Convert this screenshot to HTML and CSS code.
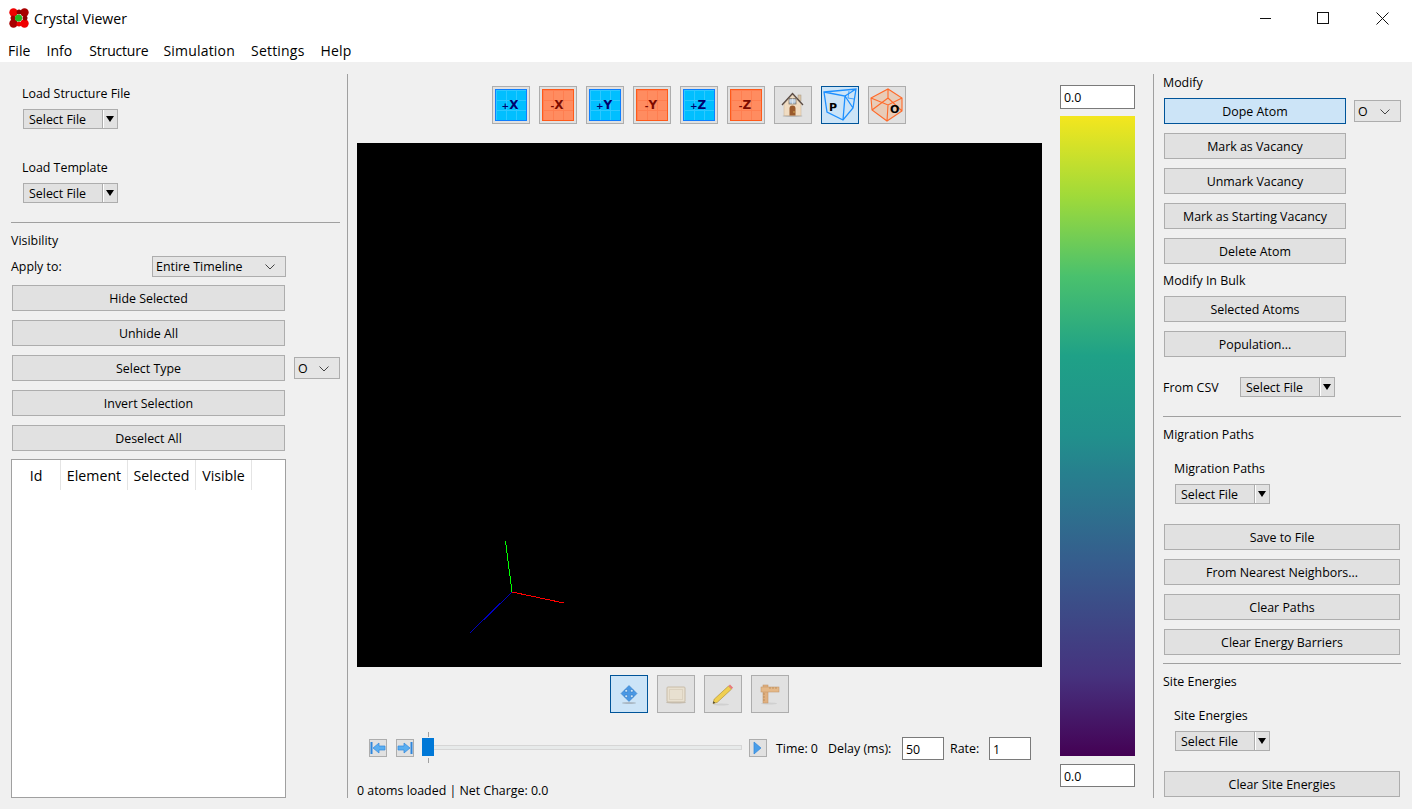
FILE: index.html
```html
<!DOCTYPE html>
<html lang="en">
<head>
	<meta charset="UTF-8">
	<title>Crystal Viewer</title>
	<link rel="stylesheet" href="styles.css">
</head>
<body>
	<div class="titlebar">
		<svg class="app-icon" width="20" height="20" viewBox="0 0 20 20">
			<circle cx="15.5" cy="4.5" r="4.2" fill="#a80000"/>
			<circle cx="4.5" cy="15.5" r="4.2" fill="#a80000"/>
			<circle cx="4.5" cy="4.5" r="4.2" fill="#f00000"/>
			<circle cx="15.5" cy="15.5" r="4.2" fill="#f00000"/>
			<circle cx="10" cy="4" r="2.5" fill="#900000"/>
			<circle cx="10" cy="16" r="2.5" fill="#f00000"/>
			<circle cx="4" cy="10" r="2.5" fill="#a00000"/>
			<circle cx="16" cy="10" r="2.5" fill="#900000"/>
			<circle cx="9.5" cy="10" r="3.6" fill="#22b522"/>
		</svg>
		<span class="app-name">Crystal Viewer</span>
		<div class="window-btns">
			<svg width="58" height="32" viewBox="0 0 58 32"><path d="M23 18.5h11" stroke="#111" fill="none"/></svg>
			<svg width="58" height="32" viewBox="0 0 58 32"><rect x="22.5" y="12.5" width="11" height="11" stroke="#111" fill="none"/></svg>
			<svg width="58" height="32" viewBox="0 0 58 32"><path d="M23.5 12.5l12 12M35.5 12.5l-12 12" stroke="#111" fill="none"/></svg>
		</div>
	</div>
	<div class="menubar">
		<span>File</span>
		<span>Info</span>
		<span class="menu-narrow">Structure</span>
		<span class="menu-wide">Simulation</span>
		<span class="menu-wide">Settings</span>
		<span class="menu-wide">Help</span>
	</div>

	<div class="main">
		<!-- left panel -->
		<div class="left">
			<div class="inset">
				<div class="lbl lbl-first">Load Structure File</div>
				<div class="menu-btn"><span class="menu-text">Select File</span><span class="menu-arrow"></span></div>
				<div class="lbl lbl-far">Load Template</div>
				<div class="menu-btn"><span class="menu-text">Select File</span><span class="menu-arrow"></span></div>
			</div>
			<div class="sep sep-left"></div>
			<div class="lbl lbl-sep">Visibility</div>
			<div class="apply-row">
				<span class="apply-lbl">Apply to:</span>
				<div class="combo combo-wide"><span>Entire Timeline</span><svg width="10" height="6" viewBox="0 0 10 6"><path d="M0.5 0.5l4.5 4.5 4.5-4.5" stroke="#444" fill="none"/></svg></div>
			</div>
			<div class="btn-stack left-btns">
				<div class="btn btn-left">Hide Selected</div>
				<div class="btn btn-left">Unhide All</div>
				<div class="btn-row">
					<div class="btn btn-left">Select Type</div>
					<div class="combo combo-small"><span>O</span><svg width="10" height="6" viewBox="0 0 10 6"><path d="M0.5 0.5l4.5 4.5 4.5-4.5" stroke="#444" fill="none"/></svg></div>
				</div>
				<div class="btn btn-left">Invert Selection</div>
				<div class="btn btn-left">Deselect All</div>
			</div>
			<div class="table">
				<div class="th th-id">Id</div>
				<div class="th th-el">Element</div>
				<div class="th th-sel">Selected</div>
				<div class="th th-vis">Visible</div>
			</div>
		</div>

		<!-- center panel -->
		<div class="center">
			<div class="view-col">
				<div class="toolbar toolbar-top">
					<div class="tool"><div class="tile tile-blue"><span><small>+</small>X</span></div></div>
					<div class="tool"><div class="tile tile-red"><span><small>-</small>X</span></div></div>
					<div class="tool"><div class="tile tile-blue"><span><small>+</small>Y</span></div></div>
					<div class="tool"><div class="tile tile-red"><span><small>-</small>Y</span></div></div>
					<div class="tool"><div class="tile tile-blue"><span><small>+</small>Z</span></div></div>
					<div class="tool"><div class="tile tile-red"><span><small>-</small>Z</span></div></div>
					<div class="tool">
						<svg width="32" height="32" viewBox="0 0 32 32">
							<ellipse cx="15.5" cy="27" rx="10" ry="1" fill="#b8b8b8"/>
							<rect x="21" y="6" width="3" height="6" fill="#d8c4a8" stroke="#a89880" stroke-width=".5"/>
							<path d="M7 15L15.5 6 24 15v11.5H7z" fill="#f0dcc2" stroke="#c8b090" stroke-width=".5"/>
							<path d="M5 16L15.5 4.5 26 16" stroke="#5a4a42" stroke-width="1.3" fill="none"/>
							<rect x="12" y="9.5" width="7" height="5.5" fill="#b8cce0" stroke="#7a6a5a" stroke-width=".7"/>
							<path d="M15.5 9.5v5.5M12 12h7" stroke="#eee" stroke-width=".6"/>
							<path d="M12.5 26.5v-7a3 3 0 0 1 6 0v7z" fill="#9a5a2c"/>
							<circle cx="17" cy="23" r=".7" fill="#ecc860"/>
						</svg>
					</div>
					<div class="tool tool-on">
						<svg width="34" height="34" viewBox="0 0 34 34" fill="none" stroke="#1e90ff" stroke-width="1.3">
							<path d="M1 4L33 1 30 20 20 32 4 24zM1 4l21 4-2 24M22 8L33 1M22 8l8 12"/>
							<path d="M26 3l-1 7 6 1" stroke-width=".8"/>
							<text class="icon-letter" x="6" y="23">P</text>
						</svg>
					</div>
					<div class="tool">
						<svg width="34" height="34" viewBox="0 0 34 34">
							<path d="M1 10L18 1l14 9v13L17 33 2 22z" fill="#e8ccb8"/>
							<path d="M1 10L18 1l14 9v13L17 33 2 22zM1 10l17 7 14-7M18 17l-1 16M18 1v9M18 10L2 22M18 10l14 13" fill="none" stroke="#ff6a2a" stroke-width="1.1"/>
							<text class="icon-letter" x="20" y="25">O</text>
						</svg>
					</div>
				</div>
				<svg class="canvas" width="685" height="524" viewBox="0 0 685 524" shape-rendering="crispEdges">
					<path d="M155 449L113 490" stroke="#0000c0"/>
					<path d="M155 449L207 460" stroke="#f00"/>
					<path d="M155 449L148.5 398" stroke="#0f0"/>
				</svg>
				<div class="toolbar toolbar-low">
					<div class="tool tool-on">
						<svg width="28" height="28" viewBox="0 0 28 28">
							<ellipse cx="14" cy="23" rx="7" ry="1" fill="#aab8c4"/>
							<path d="M14 5.5l4 4h-2.500v2.500h2.500v-2.500l4 4-4 4v-2.500h-2.500v2.500h2.500l-4 4-4-4h2.500v-2.500h-2.500v2.500l-4-4 4-4v2.500h2.500v-2.500h-2.500z" fill="#4a98e4" stroke="#2a74c0" stroke-width=".5"/>
						</svg>
					</div>
					<div class="tool">
						<svg width="30" height="30" viewBox="0 0 30 30">
							<ellipse cx="15" cy="23.5" rx="10" ry="1" fill="#c4bcb0"/>
							<rect x="6" y="8" width="18" height="15" rx="1" fill="#e8e0d0" stroke="#c8bca8"/>
							<rect x="8.5" y="10.5" width="13" height="10" fill="none" stroke="#bdb098" stroke-width=".6" stroke-dasharray="1 1"/>
						</svg>
					</div>
					<div class="tool">
						<svg width="30" height="30" viewBox="0 0 30 30">
							<ellipse cx="13" cy="25.5" rx="8" ry="1" fill="#d0d0d0"/>
							<path d="M5 24.5l1.200-4.300L20.500 7l3.100 3.100L9.300 23.300z" fill="#f0cf50" stroke="#a8882a" stroke-width=".6"/>
							<path d="M20.500 7l1.500-1.400 3.100 3.100-1.500 1.400z" fill="#e87a7a"/>
							<path d="M5 24.5l.6-2.200 1.600 1.600z" fill="#333"/>
						</svg>
					</div>
					<div class="tool">
						<svg width="30" height="30" viewBox="0 0 30 30">
							<ellipse cx="14" cy="24.5" rx="8" ry="1" fill="#d0d0d0"/>
							<rect x="8" y="6" width="5" height="18" fill="#e0b080" stroke="#c09060" stroke-width=".5"/>
							<rect x="6" y="8" width="18" height="5" fill="#e4b888" stroke="#c09060" stroke-width=".5"/>
							<path d="M15 8v2M18 8v2M21 8v2M8 15h2M8 18h2M8 21h2" stroke="#a87a48" stroke-width=".6"/>
						</svg>
					</div>
				</div>
				<div class="player">
					<div class="step">
						<svg width="16" height="16" viewBox="0 0 16 16"><path d="M1.5 2v12" stroke="#2f86dc" stroke-width="2"/><path d="M3 8l6-5v3h6v4H9v3z" fill="#5aaef0" stroke="#2f86dc" stroke-width=".7"/></svg>
					</div>
					<div class="step">
						<svg width="16" height="16" viewBox="0 0 16 16"><path d="M14.5 2v12" stroke="#2f86dc" stroke-width="2"/><path d="M13 8L7 3v3H1v4h6v3z" fill="#5aaef0" stroke="#2f86dc" stroke-width=".7"/></svg>
					</div>
					<div class="slider">
						<div class="slider-track"></div>
						<div class="slider-tick tick-top"></div>
						<div class="slider-thumb"></div>
						<div class="slider-tick tick-bottom"></div>
					</div>
					<div class="step">
						<svg width="16" height="16" viewBox="0 0 16 16"><path d="M4 2l7 6-7 6z" fill="#4a9ee8" stroke="#2f86dc" stroke-width=".7"/></svg>
					</div>
					<span class="time-lbl">Time: 0</span>
					<span class="delay-lbl">Delay (ms):</span>
					<div class="num">50</div>
					<span class="rate-lbl">Rate:</span>
					<div class="num">1</div>
				</div>
				<div class="status">0 atoms loaded | Net Charge: 0.0</div>
			</div>
			<div class="scale-col">
				<div class="scale-input">0.0</div>
				<div class="scale-bar"></div>
				<div class="scale-input scale-input-low">0.0</div>
			</div>
		</div>

		<!-- right panel -->
		<div class="right">
			<div class="lbl">Modify</div>
			<div class="btn-stack right-first">
				<div class="btn-row">
					<div class="btn btn-mod btn-on">Dope Atom</div>
					<div class="combo combo-dope"><span>O</span><svg width="10" height="6" viewBox="0 0 10 6"><path d="M0.5 0.5l4.5 4.5 4.5-4.5" stroke="#444" fill="none"/></svg></div>
				</div>
				<div class="btn btn-mod">Mark as Vacancy</div>
				<div class="btn btn-mod">Unmark Vacancy</div>
				<div class="btn btn-mod">Mark as Starting Vacancy</div>
				<div class="btn btn-mod">Delete Atom</div>
			</div>
			<div class="lbl lbl-near">Modify In Bulk</div>
			<div class="btn-stack right-first">
				<div class="btn btn-mod">Selected Atoms</div>
				<div class="btn btn-mod">Population...</div>
			</div>
			<div class="csv-row">
				<span class="csv-lbl">From CSV</span>
				<div class="menu-btn"><span class="menu-text">Select File</span><span class="menu-arrow"></span></div>
			</div>
			<div class="sep sep-right"></div>
			<div class="lbl lbl-sep">Migration Paths</div>
			<div class="sub">
				<div class="lbl">Migration Paths</div>
				<div class="menu-btn"><span class="menu-text">Select File</span><span class="menu-arrow"></span></div>
			</div>
			<div class="btn-stack right-wide">
				<div class="btn btn-full">Save to File</div>
				<div class="btn btn-full">From Nearest Neighbors...</div>
				<div class="btn btn-full">Clear Paths</div>
				<div class="btn btn-full">Clear Energy Barriers</div>
			</div>
			<div class="sep sep-right sep-tight"></div>
			<div class="lbl lbl-sep">Site Energies</div>
			<div class="sub">
				<div class="lbl">Site Energies</div>
				<div class="menu-btn"><span class="menu-text">Select File</span><span class="menu-arrow"></span></div>
			</div>
			<div class="btn-stack right-wide">
				<div class="btn btn-full">Clear Site Energies</div>
			</div>
		</div>
	</div>
</body>
</html>
```

FILE: styles.css
```css
html, body{
	margin: 0px;
	padding: 0px;
	height: 809px;
	overflow: hidden;
}
body{
	background: #f0f0f0;
	color: #000000;
	font-family: "Open Sans", "Noto Sans", sans-serif;
	font-size: 12.4px;
}
.titlebar{
	height: 32px;
	background: #ffffff;
	display: flex;
	align-items: center;
	padding-left: 9px;
	box-sizing: border-box;
}
.app-icon{
	margin-top: 4px;
}
.app-name{
	margin-left: 5px;
	font-size: 14.1px;
	margin-top: 5px;
}
.window-btns{
	margin-left: auto;
	margin-right: 1px;
	display: flex;
}
.window-btns svg{
	display: block;
}
.menubar{
	height: 30px;
	background: #ffffff;
	display: flex;
	align-items: center;
	padding-left: 8px;
	padding-top: 6px;
	box-sizing: border-box;
	gap: 16px;
	font-size: 14px;
	letter-spacing: 0.07px;
}
.menu-narrow{
	margin-left: 1px;
	margin-right: -1px;
	letter-spacing: -0.2px;
}
.menu-wide{
	letter-spacing: 0.2px;
}
.main{
	height: 747px;
	display: flex;
	padding-top: 12px;
	box-sizing: border-box;
}
.lbl{
	height: 16px;
	line-height: 18px;
}
.lbl-first{
	margin-top: 11px;
}
.lbl-far{
	margin-top: 30px;
}
.lbl-sep{
	margin-top: 9px;
}
.lbl-near{
	margin-top: 8px;
}

/* left panel */
.left{
	width: 336px;
	height: 724px;
	border-right: 1px solid #a0a0a0;
	padding-left: 11px;
}
.inset{
	padding-left: 11px;
}
.inset .menu-btn{
	margin-top: 8px;
	margin-left: 1px;
}
.sep{
	height: 1px;
	background: #a0a0a0;
}
.sep-left{
	width: 329px;
	margin-top: 19px;
}
.apply-row{
	display: flex;
	align-items: center;
	margin-top: 8px;
	height: 21px;
}
.apply-lbl{
	width: 141px;
}
.left-btns{
	margin-top: 8px;
	margin-left: 1px;
}
.btn-stack{
	display: flex;
	flex-direction: column;
	gap: 9px;
}
.btn-row{
	display: flex;
	align-items: center;
	gap: 8px;
}
.btn{
	height: 26px;
	line-height: 26px;
	box-sizing: border-box;
	background: #e1e1e1;
	border: 1px solid #adadad;
	text-align: center;
	flex: none;
}
.btn-left{
	width: 273px;
}
.btn-mod{
	width: 182px;
}
.btn-full{
	width: 236px;
}
.btn-on{
	background: #cce4f7;
	border-color: #005499;
}
.combo{
	height: 22px;
	box-sizing: border-box;
	background: #e5e5e5;
	border: 1px solid #adadad;
	display: flex;
	align-items: center;
	justify-content: space-between;
	padding: 1px 10px 0px 3px;
}
.combo-wide{
	width: 134px;
	height: 21px;
	padding-top: 0px;
}
.combo-small{
	width: 46px;
	margin-left: 1px;
}
.combo-dope{
	width: 47px;
}
.menu-btn{
	width: 95px;
	height: 20px;
	box-sizing: border-box;
	background: #e1e1e1;
	border: 1px solid #adadad;
	display: flex;
	align-items: stretch;
}
.menu-text{
	width: 79px;
	line-height: 20px;
	padding-left: 5px;
	box-sizing: border-box;
	border-right: 1px solid #adadad;
	box-shadow: 1px 0px 0px #ffffff;
	white-space: nowrap;
}
.menu-arrow{
	width: 0px;
	height: 0px;
	margin: 6px 0px 0px 3px;
	border-left: 4.5px solid transparent;
	border-right: 4.5px solid transparent;
	border-top: 6px solid #000000;
}
.table{
	margin-top: 8px;
	width: 275px;
	height: 339px;
	box-sizing: border-box;
	background: #ffffff;
	border: 1px solid #a0a0a0;
	display: flex;
	align-items: flex-start;
}
.th{
	height: 30px;
	line-height: 32px;
	font-size: 14.2px;
	text-align: center;
	border-right: 1px solid #e4e4e4;
	box-sizing: border-box;
}
.th-id{
	width: 49px;
}
.th-el{
	width: 67px;
}
.th-sel{
	width: 68px;
}
.th-vis{
	width: 56px;
}

/* center panel */
.center{
	width: 805px;
	display: flex;
	padding-left: 9px;
	box-sizing: border-box;
}
.view-col{
	width: 685px;
	padding-top: 12px;
}
.toolbar{
	display: flex;
	justify-content: center;
	gap: 9px;
}
.toolbar-top{
	justify-content: flex-start;
	padding-left: 135px;
}
.toolbar-low{
	margin-top: 8px;
}
.tool{
	width: 38px;
	height: 38px;
	box-sizing: border-box;
	background: #e1e1e1;
	border: 1px solid #adadad;
	display: flex;
	align-items: center;
	justify-content: center;
}
.tool-on{
	background: #cce4f7;
	border-color: #005499;
}
.tile{
	width: 32px;
	height: 32px;
	box-sizing: border-box;
	border: 1px solid;
	padding-right: 2px;
	display: flex;
	align-items: center;
	justify-content: center;
	background-size: 10px 10px;
	font-family: "DejaVu Sans", sans-serif;
	font-weight: bold;
	font-size: 12px;
}
.tile small{
	font-size: 9px;
}
.tile-blue{
	border-color: #0f7fff;
	color: #00006e;
	background-color: #00bfff;
	background-image: linear-gradient(#2cc8ff 1px, transparent 1px), linear-gradient(90deg, #2cc8ff 1px, transparent 1px);
}
.tile-red{
	border-color: #ff5a1a;
	color: #7c0a00;
	background-color: #ff8c60;
	background-image: linear-gradient(#ff7e50 1px, transparent 1px), linear-gradient(90deg, #ff7e50 1px, transparent 1px);
}
.icon-letter{
	font-family: "DejaVu Sans", sans-serif;
	font-weight: bold;
	font-size: 11px;
	fill: #000000;
	stroke: none;
}
.canvas{
	display: block;
	margin-top: 19px;
	background: #000000;
}
.player{
	margin-top: 24px;
	height: 23px;
	display: flex;
	align-items: center;
	padding-left: 12px;
}
.step{
	width: 18px;
	height: 18px;
	box-sizing: border-box;
	background: #e1e1e1;
	border: 1px solid #adadad;
	margin-right: 9px;
	margin-top: -1px;
	flex: none;
}
.step svg{
	display: block;
}
.slider{
	position: relative;
	width: 320px;
	height: 31px;
	margin-left: -1px;
	margin-right: 7px;
	flex: none;
}
.slider-track{
	position: absolute;
	left: 6px;
	right: 0px;
	top: 12px;
	height: 5px;
	box-sizing: border-box;
	background: #e7eaea;
	border: 1px solid #d6d6d6;
}
.slider-thumb{
	position: absolute;
	left: 0px;
	top: 5px;
	width: 12px;
	height: 18px;
	background: #0078d7;
}
.slider-tick{
	position: absolute;
	left: 6px;
	width: 1px;
	height: 5px;
	background: #a0a0a0;
}
.tick-top{
	top: -1px;
}
.tick-bottom{
	top: 25px;
}
.time-lbl{
	width: 52px;
}
.delay-lbl{
	width: 74px;
}
.num{
	width: 42px;
	height: 23px;
	line-height: 23px;
	box-sizing: border-box;
	background: #ffffff;
	border: 1px solid #7a7a7a;
	padding-left: 3px;
	flex: none;
}
.rate-lbl{
	margin-left: 6px;
	width: 39px;
}
.status{
	margin-top: 22px;
	height: 16px;
	line-height: 18px;
}
.scale-col{
	width: 75px;
	margin-left: 18px;
	padding-top: 11px;
}
.scale-input{
	height: 24px;
	line-height: 24px;
	box-sizing: border-box;
	background: #ffffff;
	border: 1px solid #7a7a7a;
	padding-left: 3px;
}
.scale-input-low{
	margin-top: 8px;
	height: 23px;
	line-height: 23px;
}
.scale-bar{
	margin-top: 7px;
	height: 640px;
	background: linear-gradient(#f4e61e, #a0da39 12.5%, #4ac16d 25%, #1fa187 37.5%, #21908c 50%, #277f8e 56%, #365c8d 70%, #46327e 87.5%, #440154);
}

/* right panel */
.right{
	width: 259px;
	height: 724px;
	border-left: 1px solid #a0a0a0;
	padding-left: 9px;
	box-sizing: border-box;
}
.right-first{
	margin-top: 8px;
	margin-left: 1px;
}
.csv-row{
	display: flex;
	align-items: center;
	margin-top: 20px;
}
.csv-lbl{
	width: 77px;
	padding-top: 1px;
}
.sep-right{
	width: 238px;
	margin-top: 19px;
}
.sep-tight{
	margin-top: 8px;
}
.sub{
	margin-top: 18px;
	padding-left: 11px;
}
.sub .menu-btn{
	margin-top: 8px;
	margin-left: 1px;
}
.right-wide{
	margin-top: 20px;
	margin-left: 1px;
}
```
